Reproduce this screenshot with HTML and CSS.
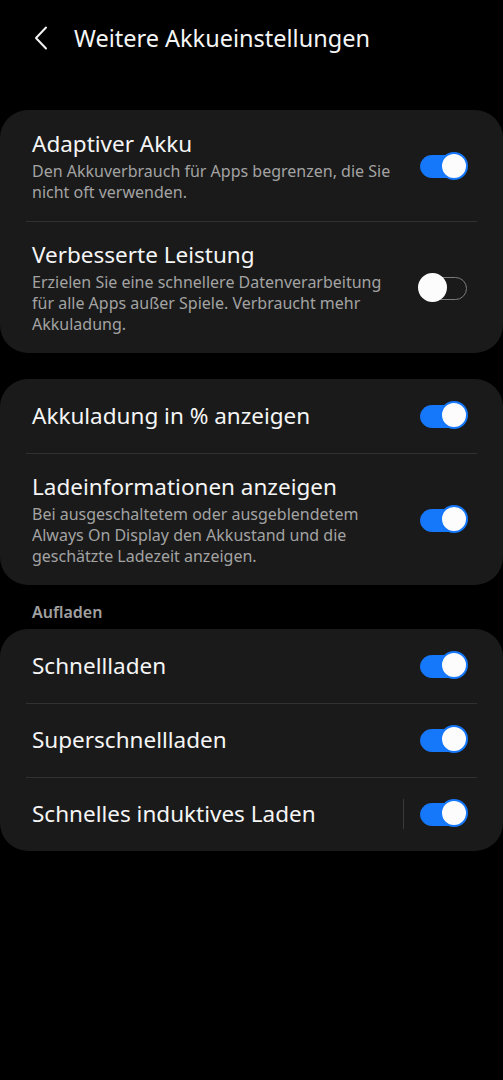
FILE: index.html
```html
<!DOCTYPE html>
<html lang="de">
  <head>
    <meta charset="UTF-8" />
    <meta name="viewport" content="width=device-width, initial-scale=1.0" />
    <title>Weitere Akkueinstellungen</title>
    <link rel="stylesheet" href="styles.css">
  </head>
  <body>
    <header class="top-bar">
      <svg class="back" width="14" height="24" viewBox="0 0 14 24">
        <path d="M12 1.5 L2 12 L12 22.5" fill="none" stroke="#f2f2f2" stroke-width="2" stroke-linecap="round" stroke-linejoin="round" />
      </svg>
      <h1>Weitere Akkueinstellungen</h1>
    </header>

    <!-- Akku -->
    <section class="card">
      <div class="row">
        <div class="text">
          <div class="title">Adaptiver Akku</div>
          <div class="sub">Den Akkuverbrauch für Apps begrenzen, die Sie nicht oft verwenden.</div>
        </div>
        <span class="switch on"></span>
      </div>
      <div class="row">
        <div class="text">
          <div class="title">Verbesserte Leistung</div>
          <div class="sub">Erzielen Sie eine schnellere Datenverarbeitung für alle Apps außer Spiele. Verbraucht mehr Akkuladung.</div>
        </div>
        <span class="switch"></span>
      </div>
    </section>

    <!-- Anzeige -->
    <section class="card">
      <div class="row single">
        <div class="text">
          <div class="title">Akkuladung in % anzeigen</div>
        </div>
        <span class="switch on"></span>
      </div>
      <div class="row">
        <div class="text">
          <div class="title">Ladeinformationen anzeigen</div>
          <div class="sub">Bei ausgeschaltetem oder ausgeblendetem Always On Display den Akkustand und die geschätzte Ladezeit anzeigen.</div>
        </div>
        <span class="switch on"></span>
      </div>
    </section>

    <div class="section-label">Aufladen</div>

    <section class="card">
      <div class="row single">
        <div class="text">
          <div class="title">Schnellladen</div>
        </div>
        <span class="switch on"></span>
      </div>
      <div class="row single">
        <div class="text">
          <div class="title">Superschnellladen</div>
        </div>
        <span class="switch on"></span>
      </div>
      <div class="row single">
        <div class="text">
          <div class="title">Schnelles induktives Laden</div>
        </div>
        <span class="vline"></span>
        <span class="switch on"></span>
      </div>
    </section>
  </body>
</html>
```

FILE: styles.css
```css
/* Dark settings screen */
body {
  margin: 0;
  background: #000;
  color: #f5f5f5;
  font-family: "Noto Sans", Roboto, sans-serif;
}

.top-bar {
  display: flex;
  align-items: center;
  height: 76px;
  padding-left: 34px;
}

.top-bar .back {
  margin-right: 26px;
}

.top-bar h1 {
  margin: 0;
  font-size: 23.5px;
  font-weight: 400;
  color: #f5f5f5;
}

.card {
  background: #1a1a1a;
  border-radius: 28px;
  margin-top: 34px;
}

.card + .card {
  margin-top: 26px;
}

.section-label + .card {
  margin-top: 0;
}

.row {
  display: flex;
  align-items: center;
  padding: 20px 36px 18px 32px;
  position: relative;
}

.row.single {
  padding: 19px 36px 19px 32px;
  min-height: 36px;
}

/* divider between rows */
.row + .row::before {
  content: "";
  position: absolute;
  top: 0;
  left: 26px;
  right: 26px;
  height: 1px;
  background: #313131;
}

.text {
  flex: 1;
  padding-right: 25px;
}

.title {
  font-size: 22.5px;
  line-height: 28px;
}

.sub {
  font-size: 16px;
  line-height: 21px;
  color: #a3a3a3;
  margin-top: 3px;
}

.section-label {
  font-size: 16px;
  line-height: 22px;
  font-weight: 600;
  color: #a0a0a0;
  padding: 16px 32px 6px;
}

.vline {
  width: 1px;
  height: 30px;
  background: #3a3a3a;
  margin-right: 16px;
}

/* Toggle switch */
.switch {
  position: relative;
  flex: none;
  width: 47px;
  height: 23px;
  box-sizing: border-box;
  border: 1.5px solid #7c7c7c;
  border-radius: 12px;
}

.switch::after {
  content: "";
  position: absolute;
  top: -4.5px;
  left: -3px;
  width: 25px;
  height: 25px;
  border-radius: 50%;
  background: #fcfcfc;
  border: 2px solid #fcfcfc;
}

.switch.on {
  background: #1577fa;
  border-color: #1577fa;
}

.switch.on::after {
  left: auto;
  right: -2px;
  width: 24px;
  height: 24px;
  border-color: #1577fa;
}
```
